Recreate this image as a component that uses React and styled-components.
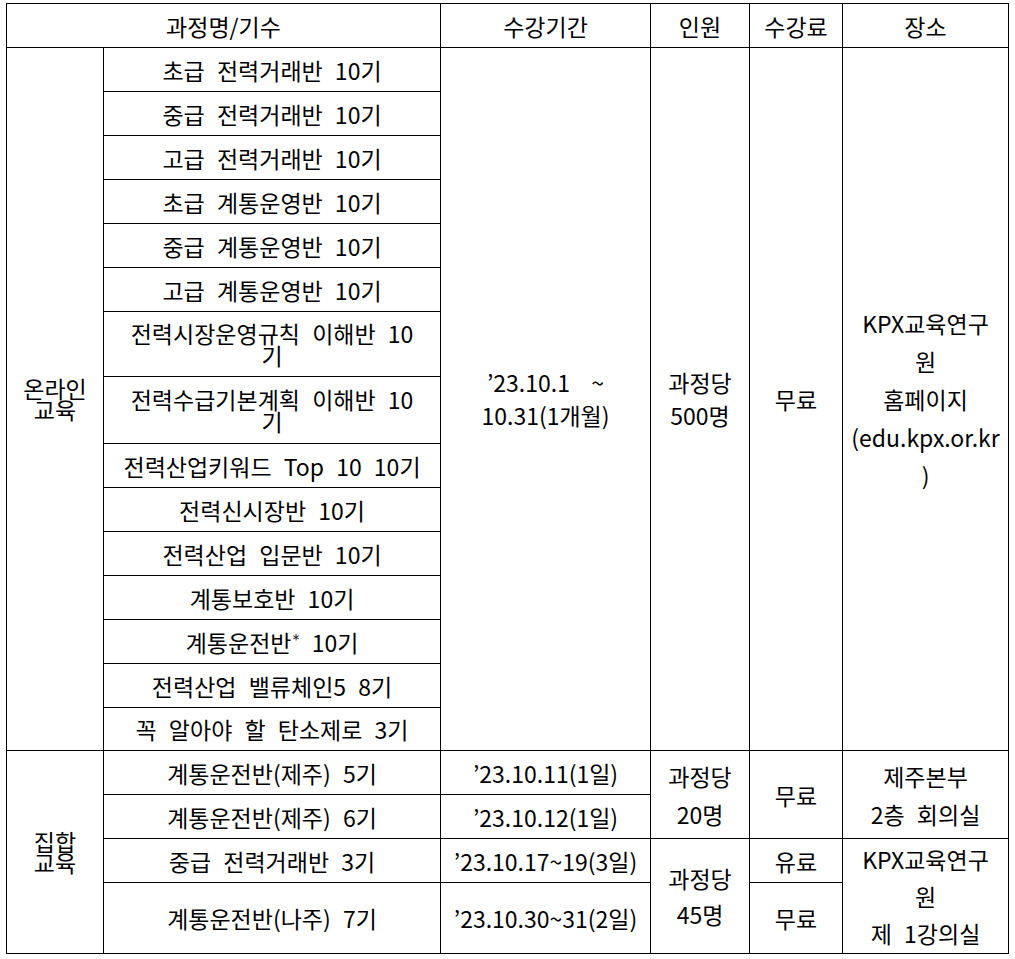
import styled, { createGlobalStyle } from "styled-components";

const GlobalStyle = createGlobalStyle`
  html, body {
    margin: 0;
    background: #fff;
  }
  body {
    font-family: "Noto Sans CJK KR", "Malgun Gothic", sans-serif;
    color: #000;
  }
`;

const Page = styled.div`
  padding: 3px 0 0 6px;
`;

const Table = styled.table`
  border-collapse: collapse;
  table-layout: fixed;
  width: 1002px;
  font-size: 23px;
`;

const Col = styled.col`
  width: ${(p) => p.$w}px;
`;

const Row = styled.tr`
  height: ${(p) => p.$h}px;
`;

const Cell = styled.td`
  border: 1px solid #000;
  padding: 0;
  text-align: center;
  vertical-align: middle;
  font-weight: 400;
  line-height: ${(p) => p.$lh || 24}px;
  word-spacing: ${(p) => (p.$tight ? 2 : 7)}px;
  white-space: nowrap;
`;

const Head = styled(Cell).attrs({ as: "th" })``;

const Star = styled.sup`
  font-size: 14px;
  line-height: 0;
  vertical-align: 8px;
  margin-left: 1px;
  font-family: "DejaVu Sans", sans-serif;
`;

const online = [
  { h: 44, text: "초급 전력거래반 10기" },
  { h: 44, text: "중급 전력거래반 10기" },
  { h: 44, text: "고급 전력거래반 10기" },
  { h: 44, text: "초급 계통운영반 10기" },
  { h: 44, text: "중급 계통운영반 10기" },
  { h: 44, text: "고급 계통운영반 10기" },
  { h: 65, text: "전력시장운영규칙 이해반 10", tail: "기" },
  { h: 67, text: "전력수급기본계획 이해반 10", tail: "기" },
  { h: 44, text: "전력산업키워드 Top 10 10기" },
  { h: 44, text: "전력신시장반 10기" },
  { h: 44, text: "전력산업 입문반 10기" },
  { h: 44, text: "계통보호반 10기" },
  { h: 44, text: "계통운전반", star: true, after: " 10기" },
  { h: 44, text: "전력산업 밸류체인5 8기" },
  { h: 43, text: "꼭 알아야 할 탄소제로 3기" },
];

const CourseName = ({ item }) => (
  <Cell $lh={22}>
    {item.text}
    {item.star && <Star>*</Star>}
    {item.after}
    {item.tail && (
      <>
        <br />
        {item.tail}
      </>
    )}
  </Cell>
);

export default function App() {
  return (
    <Page>
      <GlobalStyle />
      <Table>
        <colgroup>
          <Col $w={97} />
          <Col $w={337} />
          <Col $w={210} />
          <Col $w={99} />
          <Col $w={93} />
          <Col $w={166} />
        </colgroup>
        <thead>
          <Row $h={44}>
            <Head colSpan={2}>과정명/기수</Head>
            <Head>수강기간</Head>
            <Head>인원</Head>
            <Head>수강료</Head>
            <Head>장소</Head>
          </Row>
        </thead>
        <tbody>
          {online.map((item, i) =>
            i === 0 ? (
              <Row key={i} $h={item.h}>
                <Cell rowSpan={online.length} $lh={21}>
                  온라인
                  <br />
                  교육
                </Cell>
                <CourseName item={item} />
                <Cell rowSpan={online.length} $lh={33} $tight>
                  ’23.10.1&nbsp;&nbsp; ~
                  <br />
                  10.31(1개월)
                </Cell>
                <Cell rowSpan={online.length} $lh={33}>
                  과정당
                  <br />
                  500명
                </Cell>
                <Cell rowSpan={online.length}>무료</Cell>
                <Cell rowSpan={online.length} $lh={38}>
                  KPX교육연구
                  <br />원
                  <br />
                  홈페이지
                  <br />
                  (edu.kpx.or.kr
                  <br />)
                </Cell>
              </Row>
            ) : (
              <Row key={i} $h={item.h}>
                <CourseName item={item} />
              </Row>
            )
          )}
          <Row $h={44}>
            <Cell rowSpan={4} $lh={21}>
              집합
              <br />
              교육
            </Cell>
            <Cell>계통운전반(제주) 5기</Cell>
            <Cell>’23.10.11(1일)</Cell>
            <Cell rowSpan={2} $lh={38}>
              과정당
              <br />
              20명
            </Cell>
            <Cell rowSpan={2}>무료</Cell>
            <Cell rowSpan={2} $lh={38}>
              제주본부
              <br />
              2층 회의실
            </Cell>
          </Row>
          <Row $h={44}>
            <Cell>계통운전반(제주) 6기</Cell>
            <Cell>’23.10.12(1일)</Cell>
          </Row>
          <Row $h={44}>
            <Cell>중급 전력거래반 3기</Cell>
            <Cell>’23.10.17~19(3일)</Cell>
            <Cell rowSpan={2} $lh={36}>
              과정당
              <br />
              45명
            </Cell>
            <Cell>유료</Cell>
            <Cell rowSpan={2} $lh={37}>
              KPX교육연구
              <br />원
              <br />제 1강의실
            </Cell>
          </Row>
          <Row $h={71}>
            <Cell>계통운전반(나주) 7기</Cell>
            <Cell>’23.10.30~31(2일)</Cell>
            <Cell>무료</Cell>
          </Row>
        </tbody>
      </Table>
    </Page>
  );
}
